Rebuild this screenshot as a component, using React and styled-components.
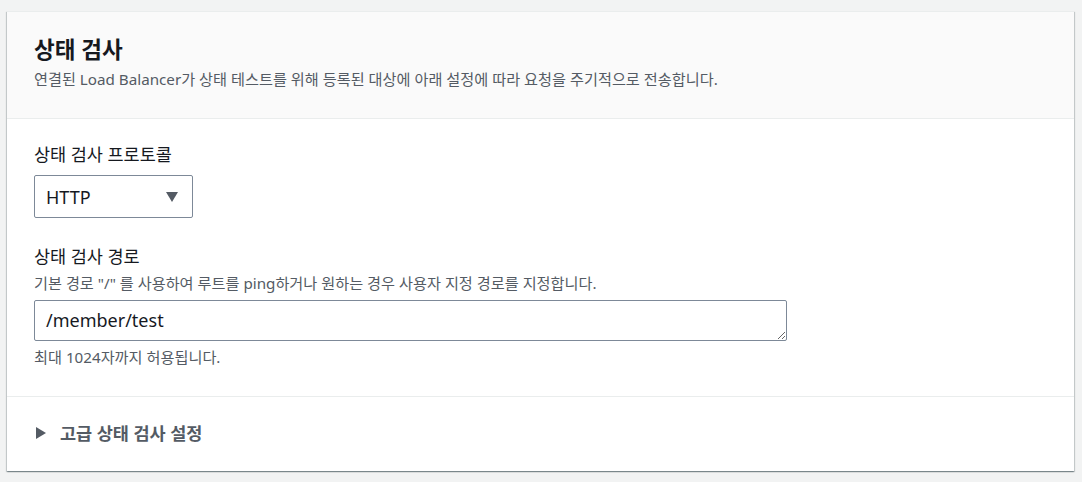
import React from "react";
import styled, { createGlobalStyle } from "styled-components";

const FONT = `"Noto Sans", "Noto Sans CJK KR", sans-serif`;

const GlobalStyle = createGlobalStyle`
  html, body {
    margin: 0;
    padding: 0;
    background: #f2f3f3;
  }
  body {
    font-family: ${FONT};
    color: #16191f;
  }
  * { box-sizing: border-box; }
`;

const Page = styled.div`
  padding: 11px 8px 9px 7px;
`;

const Card = styled.section`
  background: #ffffff;
  border-top: 1px solid #eaeded;
  box-shadow: 0 1px 1px 0 rgba(0, 28, 36, 0.3), 1px 1px 1px 0 rgba(0, 28, 36, 0.15),
    -1px 1px 1px 0 rgba(0, 28, 36, 0.15);
`;

const Header = styled.header`
  background: #fafafa;
  border-bottom: 1px solid #eaeded;
  padding: 23px 27px 29px;
`;

const Title = styled.h2`
  margin: 0;
  font-size: 22.5px;
  line-height: 30px;
  font-weight: 700;
  color: #16191f;
`;

const Description = styled.p`
  margin: 4px 0 0;
  font-size: 15.2px;
  line-height: 20px;
  color: #545b64;
`;

const Body = styled.div`
  padding: 24px 27px 30px;
  border-bottom: 1px solid #eaeded;
`;

const Field = styled.div`
  display: flex;
  flex-direction: column;
  align-items: flex-start;
  & + & {
    margin-top: 27px;
  }
`;

const Label = styled.label`
  font-size: 17.5px;
  line-height: 22px;
  color: #16191f;
`;

const Help = styled.div`
  font-size: 15.2px;
  line-height: 18px;
  color: #545b64;
  margin-top: ${(p) => p.$top || 0}px;
`;

const SelectBox = styled.div`
  margin-top: 10px;
  width: 159px;
  height: 43px;
  border: 1px solid #7d8998;
  border-radius: 2px;
  display: flex;
  align-items: center;
  justify-content: space-between;
  padding: 0 14px 0 11px;
  font-size: 18px;
  color: #16191f;
  background: #fff;
`;

const Caret = styled.span`
  width: 0;
  height: 0;
  border-left: 6px solid transparent;
  border-right: 6px solid transparent;
  border-top: 10px solid #545b64;
`;

const TextArea = styled.textarea`
  margin-top: 8px;
  width: 753px;
  height: 41px;
  border: 1px solid #7d8998;
  border-radius: 2px;
  padding: 8px 11px;
  font-family: ${FONT};
  font-size: 18px;
  line-height: 22px;
  color: #16191f;
  resize: both;
  outline: none;
  overflow: hidden;
`;

const Expander = styled.div`
  padding: 24px 29px 26px;
  display: flex;
  align-items: center;
  gap: 14px;
`;

const Arrow = styled.span`
  width: 0;
  height: 0;
  border-top: 6px solid transparent;
  border-bottom: 6px solid transparent;
  border-left: 10px solid #545b64;
`;

const ExpanderText = styled.span`
  font-size: 17.5px;
  line-height: 24px;
  font-weight: 700;
  color: #545b64;
`;

export default function App() {
  return (
    <>
      <GlobalStyle />
      <Page>
        <Card>
          <Header>
            <Title>상태 검사</Title>
            <Description>
              연결된 Load Balancer가 상태 테스트를 위해 등록된 대상에 아래 설정에 따라 요청을 주기적으로 전송합니다.
            </Description>
          </Header>
          <Body>
            <Field>
              <Label>상태 검사 프로토콜</Label>
              <SelectBox>
                <span>HTTP</span>
                <Caret />
              </SelectBox>
            </Field>
            <Field>
              <Label>상태 검사 경로</Label>
              <Help $top={7}>
                기본 경로 "/" 를 사용하여 루트를 ping하거나 원하는 경우 사용자 지정 경로를 지정합니다.
              </Help>
              <TextArea defaultValue="/member/test" />
              <Help $top={7}>최대 1024자까지 허용됩니다.</Help>
            </Field>
          </Body>
          <Expander>
            <Arrow />
            <ExpanderText>고급 상태 검사 설정</ExpanderText>
          </Expander>
        </Card>
      </Page>
    </>
  );
}
